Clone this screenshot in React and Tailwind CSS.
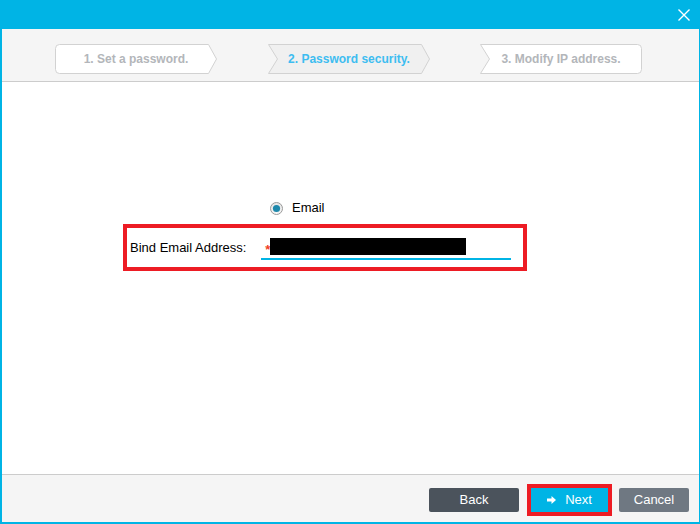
import React from 'react';

const steps = [
  { label: '1. Set a password.', shape: 'first', active: false },
  { label: '2. Password security.', shape: 'middle', active: true },
  { label: '3. Modify IP address.', shape: 'last', active: false },
];

const stepPaths = {
  first: 'M4.5,0.5 H153.5 L161.5,15 L153.5,29.5 H4.5 Q0.5,29.5 0.5,25.5 V4.5 Q0.5,0.5 4.5,0.5 Z',
  middle: 'M0.5,0.5 H153.5 L161.5,15 L153.5,29.5 H0.5 L9.5,15 Z',
  last: 'M0.5,0.5 H157.5 Q161.5,0.5 161.5,4.5 V25.5 Q161.5,29.5 157.5,29.5 H0.5 L9.5,15 Z',
};

const Step = ({ step }) => (
  <div className="relative w-[162px] h-[30px] flex items-center justify-center">
    <svg className="absolute inset-0" width="162" height="30" viewBox="0 0 162 30">
      <path
        d={stepPaths[step.shape]}
        fill={step.active ? '#f0f0f0' : '#ffffff'}
        stroke="#d2d2d2"
        strokeWidth="1"
      />
    </svg>
    <span
      className={
        'relative text-[12px] font-bold ' +
        (step.active ? 'text-[#3dbdf0]' : 'text-[#b3b6ba]')
      }
    >
      {step.label}
    </span>
  </div>
);

const App = () => {
  return (
    <div className="w-[700px] h-[524px] flex flex-col font-['Liberation_Sans',Arial,sans-serif] overflow-hidden">
      {/* Title bar */}
      <div className="h-[29px] bg-[#00b4e5] flex items-center justify-end pr-[10px] shrink-0">
        <svg width="12" height="12" viewBox="0 0 12 12">
          <path d="M0.5,0.5 L11.5,11.5 M11.5,0.5 L0.5,11.5" stroke="#ffffff" strokeWidth="1.4" />
        </svg>
      </div>

      <div className="flex-1 flex flex-col border-l-2 border-r border-b-2 border-[#00b4e5]">
        {/* Steps */}
        <div className="h-[53px] shrink-0 bg-[#f5f5f5] border-b border-[#cccccc] flex items-start pt-[15px] pl-[53px]">
          <Step step={steps[0]} />
          <div className="w-[51px]" />
          <Step step={steps[1]} />
          <div className="w-[50px]" />
          <Step step={steps[2]} />
        </div>

        {/* Body */}
        <div className="flex-1 bg-white pt-[118px]">
          <div className="ml-[268px] h-[16px] flex items-center">
            <svg width="13" height="13" viewBox="0 0 13 13">
              <defs>
                <linearGradient id="rg" x1="0" y1="0" x2="0" y2="1">
                  <stop offset="0" stopColor="#e4e4e4" />
                  <stop offset="1" stopColor="#f8f8f8" />
                </linearGradient>
              </defs>
              <circle cx="6.5" cy="6.5" r="6" fill="url(#rg)" stroke="#9a9a9a" strokeWidth="1" />
              <circle cx="6.5" cy="6.5" r="3.6" fill="#1e88ab" />
            </svg>
            <span className="ml-[9px] text-[13px] text-black">Email</span>
          </div>

          <div className="ml-[121px] mt-[8px] w-[404px] h-[47px] border-4 border-[#ed1c24] flex items-center pl-[3px]">
            <span className="text-[13px] text-black whitespace-nowrap">Bind Email Address:</span>
            <div className="ml-[15px] w-[250px] h-[24px] border-b-2 border-[#00b4e5] flex items-start pt-[2px] pl-[4px]">
              <span className="text-[13px] font-bold leading-none text-[#f0401e] mt-[5px]">*</span>
              <div className="ml-[0px] w-[196px] h-[17px] bg-black" />
            </div>
          </div>
        </div>

        {/* Footer */}
        <div className="h-[48px] shrink-0 bg-[#f5f5f5] border-t border-[#cccccc] flex items-center justify-end pt-[3px] pr-[10px]">
          <button className="w-[90px] h-[24px] rounded-[2px] bg-[#4b535c] text-white text-[13px]">
            Back
          </button>
          <div className="ml-[8px] border-4 border-[#ed1c24]">
            <button className="w-[77px] h-[24px] bg-[#00b4e5] text-white text-[13px] flex items-center justify-center">
              <svg width="9" height="8" viewBox="0 0 9 8" className="mr-[9px]">
                <path d="M0,2.5 H4.5 V0 L9,4 L4.5,8 V5.5 H0 Z" fill="#ffffff" />
              </svg>
              Next
            </button>
          </div>
          <button className="ml-[7px] w-[70px] h-[24px] rounded-[2px] bg-[#6f7882] text-white text-[13px]">
            Cancel
          </button>
        </div>
      </div>
    </div>
  );
};

export default App;
